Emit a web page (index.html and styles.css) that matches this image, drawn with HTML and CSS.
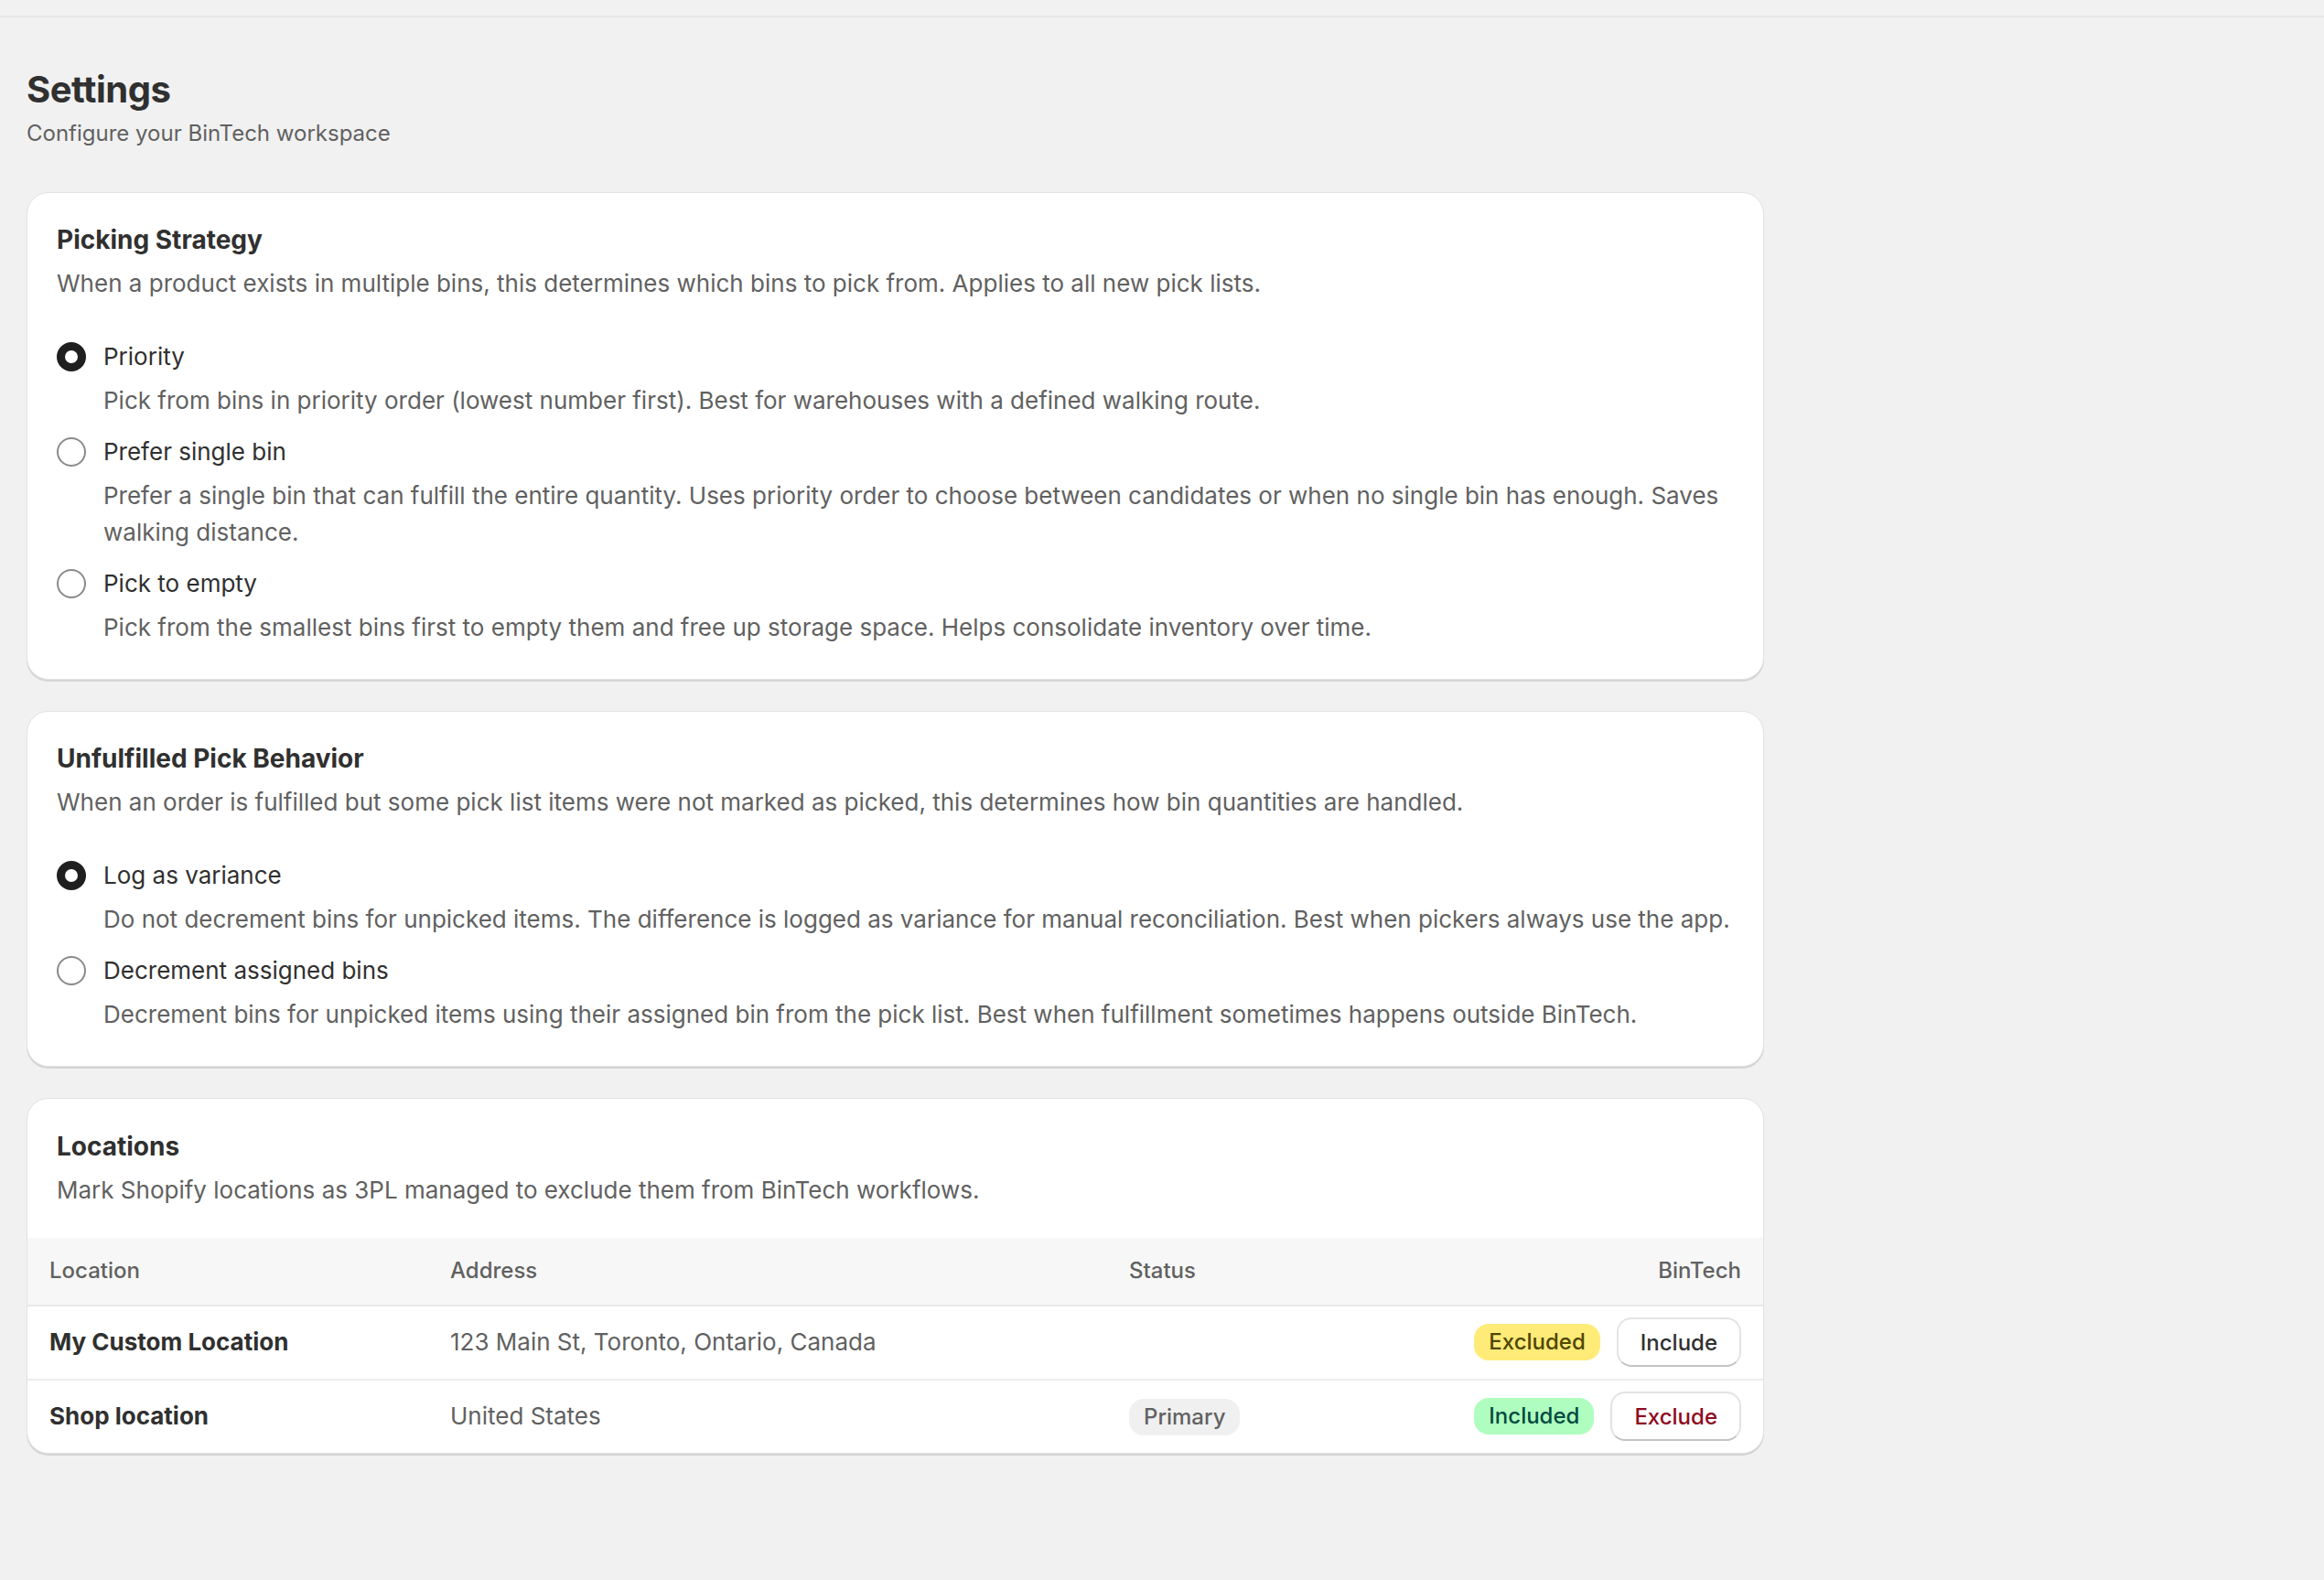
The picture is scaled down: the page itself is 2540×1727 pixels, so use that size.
FILE: index.html
```html
<!DOCTYPE html>
<html>
<head>
	<title>Settings - BinTech</title>
	<link rel="stylesheet" href="styles.css">
</head>
<body>
	<div class="topbar"></div>
	<main class="page">
		<header class="page-header">
			<h1>Settings</h1>
			<p>Configure your BinTech workspace</p>
		</header>

		<section class="card">
			<h2>Picking Strategy</h2>
			<p class="card-desc">When a product exists in multiple bins, this determines which bins to pick from. Applies to all new pick lists.</p>
			<div class="choices">
				<label class="choice">
					<span class="radio checked"></span>
					<span class="choice-text">
						<span class="choice-label">Priority</span>
						<span class="choice-help">Pick from bins in priority order (lowest number first). Best for warehouses with a defined walking route.</span>
					</span>
				</label>
				<label class="choice">
					<span class="radio"></span>
					<span class="choice-text">
						<span class="choice-label">Prefer single bin</span>
						<span class="choice-help">Prefer a single bin that can fulfill the entire quantity. Uses priority order to choose between candidates or when no single bin has enough. Saves walking distance.</span>
					</span>
				</label>
				<label class="choice">
					<span class="radio"></span>
					<span class="choice-text">
						<span class="choice-label">Pick to empty</span>
						<span class="choice-help">Pick from the smallest bins first to empty them and free up storage space. Helps consolidate inventory over time.</span>
					</span>
				</label>
			</div>
		</section>

		<section class="card">
			<h2>Unfulfilled Pick Behavior</h2>
			<p class="card-desc">When an order is fulfilled but some pick list items were not marked as picked, this determines how bin quantities are handled.</p>
			<div class="choices">
				<label class="choice">
					<span class="radio checked"></span>
					<span class="choice-text">
						<span class="choice-label">Log as variance</span>
						<span class="choice-help">Do not decrement bins for unpicked items. The difference is logged as variance for manual reconciliation. Best when pickers always use the app.</span>
					</span>
				</label>
				<label class="choice">
					<span class="radio"></span>
					<span class="choice-text">
						<span class="choice-label">Decrement assigned bins</span>
						<span class="choice-help">Decrement bins for unpicked items using their assigned bin from the pick list. Best when fulfillment sometimes happens outside BinTech.</span>
					</span>
				</label>
			</div>
		</section>

		<section class="card card-table">
			<div class="card-head">
				<h2>Locations</h2>
				<p class="card-desc">Mark Shopify locations as 3PL managed to exclude them from BinTech workflows.</p>
			</div>
			<table class="locations">
				<colgroup>
					<col class="col-name">
					<col class="col-address">
					<col>
					<col class="col-bintech">
				</colgroup>
				<thead>
					<tr>
						<th>Location</th>
						<th>Address</th>
						<th>Status</th>
						<th class="right">BinTech</th>
					</tr>
				</thead>
				<tbody>
					<tr>
						<td class="name">My Custom Location</td>
						<td class="address">123 Main St, Toronto, Ontario, Canada</td>
						<td></td>
						<td class="right">
							<div class="actions">
								<span class="badge warning">Excluded</span>
								<button class="btn">Include</button>
							</div>
						</td>
					</tr>
					<tr>
						<td class="name">Shop location</td>
						<td class="address">United States</td>
						<td><span class="badge neutral">Primary</span></td>
						<td class="right">
							<div class="actions">
								<span class="badge success">Included</span>
								<button class="btn critical">Exclude</button>
							</div>
						</td>
					</tr>
				</tbody>
			</table>
		</section>
	</main>
</body>
</html>
```

FILE: styles.css
```css
body {
	background-color: #f1f1f1;
	color: #303030;
	font-family: "Inter", "Liberation Sans", sans-serif;
	font-size: 26px;
	line-height: 40px;
	margin: 0;
	padding: 0;
}
.topbar {
	height: 17px;
	border-bottom: 2px solid #e7e7e7;
}
.page {
	width: 1899px;
	padding: 55px 0 80px 29px;
}
.page-header h1 {
	font-size: 40px;
	line-height: 48px;
	font-weight: 700;
	letter-spacing: -0.5px;
	margin: 0;
}
.page-header p {
	color: #616161;
	font-size: 24px;
	margin: 4px 0 0;
}
.page-header {
	margin-bottom: 44px;
}
.card {
	background-color: #fff;
	border: 1px solid #e2e2e2;
	border-radius: 24px;
	box-shadow: 0 2px 0 0 #d4d4d4;
	padding: 31px 32px 36px;
	margin-bottom: 34px;
}
.card h2 {
	font-size: 28px;
	line-height: 40px;
	font-weight: 650;
	margin: 0;
}
.card-desc {
	color: #616161;
	margin: 8px 0 0;
}
.choices {
	display: flex;
	flex-direction: column;
	gap: 16px;
	margin-top: 40px;
}
.choice {
	display: flex;
	gap: 19px;
	cursor: pointer;
}
.radio {
	flex: none;
	box-sizing: border-box;
	width: 32px;
	height: 32px;
	margin-top: 4px;
	border-radius: 50%;
	border: 2px solid #8a8a8a;
	background-color: #fff;
}
.radio.checked {
	border: 9px solid #1f1f1f;
}
.choice-text {
	display: flex;
	flex-direction: column;
	gap: 8px;
}
.choice-help {
	color: #616161;
}
.card-table {
	padding: 0;
	overflow: hidden;
}
.card-head {
	padding: 32px 32px 32px;
}
.locations {
	width: 100%;
	border-collapse: collapse;
	table-layout: fixed;
}
.col-name {
	width: 438px;
}
.col-address {
	width: 742px;
}
.col-bintech {
	width: 334px;
}
.locations th {
	background-color: #f7f7f7;
	color: #616161;
	font-size: 24px;
	font-weight: 500;
	text-align: left;
	padding: 16px 24px 17px;
	border-bottom: 2px solid #e8e8e8;
}
.locations td {
	padding: 12px 24px 13px;
	border-bottom: 2px solid #ececec;
	color: #616161;
}
.locations tbody tr:last-child td {
	border-bottom: none;
}
.locations td.name {
	color: #303030;
	font-weight: 650;
}
.locations .right {
	text-align: right;
}
.actions {
	display: flex;
	justify-content: flex-end;
	align-items: center;
	gap: 18px;
}
.badge {
	display: inline-block;
	font-size: 24px;
	line-height: 40px;
	padding: 0 16px;
	border-radius: 16px;
	font-weight: 450;
}
.badge.warning {
	background-color: #ffeb78;
	color: #4f4700;
}
.badge.success {
	background-color: #affebf;
	color: #014b40;
}
.badge.neutral {
	background-color: #f0f0f0;
	color: #616161;
}
.btn {
	font-family: inherit;
	font-size: 24px;
	font-weight: 550;
	color: #303030;
	height: 54px;
	padding: 0 24px;
	background-color: #fff;
	border: 2px solid #e3e3e3;
	border-bottom-color: #c4c4c4;
	border-radius: 16px;
	cursor: pointer;
}
.btn.critical {
	color: #8e0b21;
}
```
